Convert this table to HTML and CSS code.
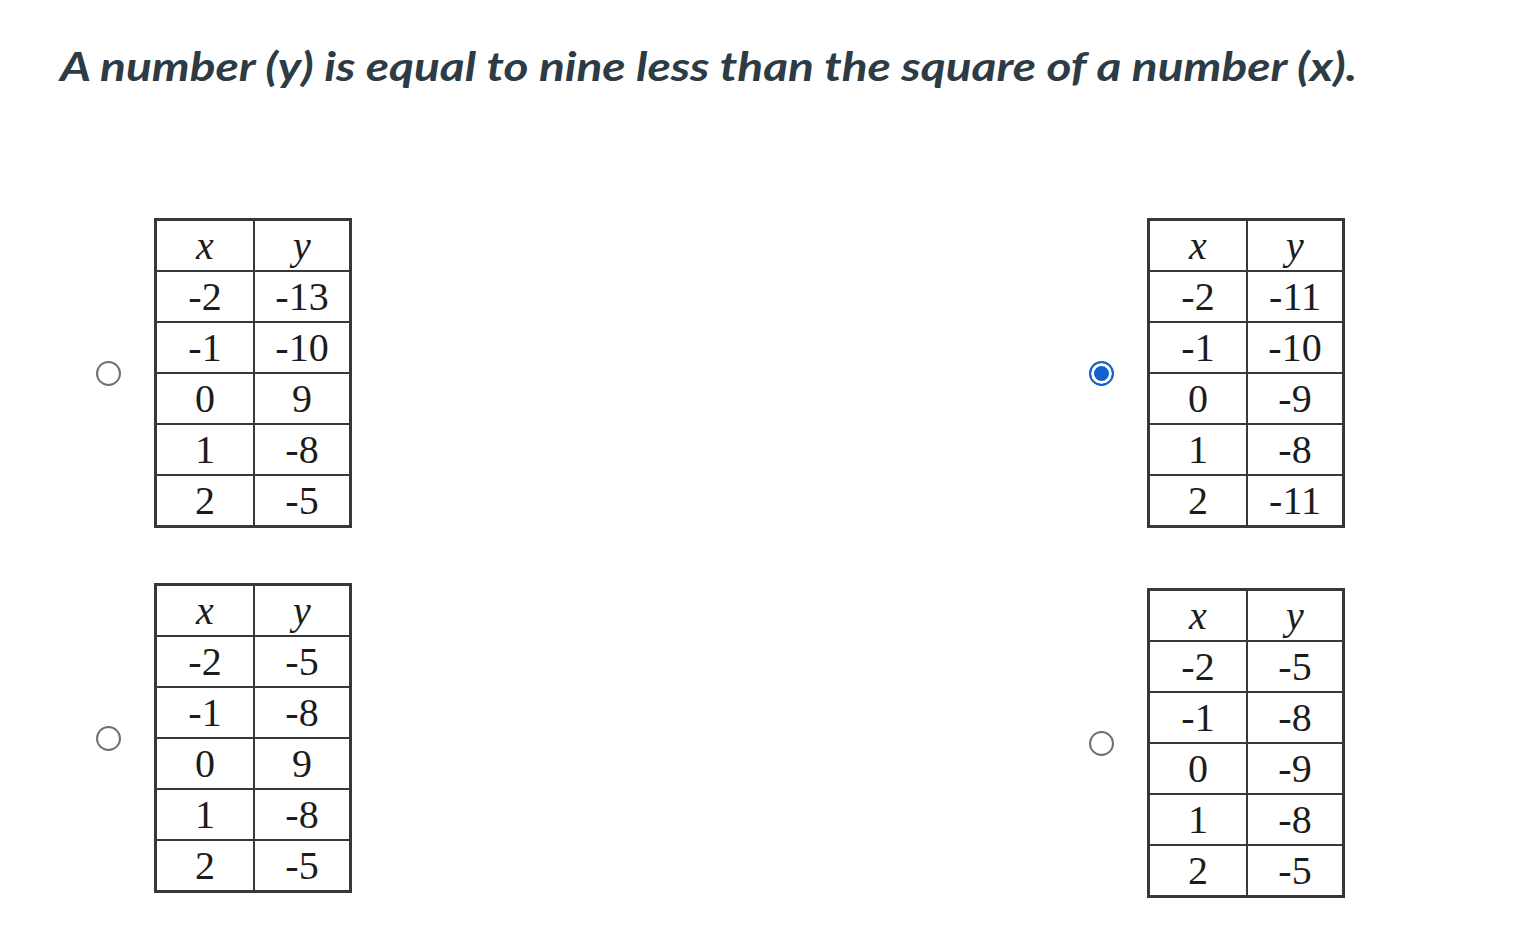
FILE: index.html
```html
<!DOCTYPE html>
<html lang="en">
<head>
<meta charset="utf-8">
<title>Question</title>
<link rel="stylesheet" href="styles.css">
</head>
<body>
<main class="page">
  <h1 class="question">A number (y) is equal to nine less than the square of a number (x).</h1>
  <div class="options">
    <label class="option">
      <input class="radio" type="radio" name="answer">
      <table class="xy">
        <tr><td class="var">x</td><td class="var">y</td></tr>
        <tr><td>-2</td><td>-13</td></tr>
        <tr><td>-1</td><td>-10</td></tr>
        <tr><td>0</td><td>9</td></tr>
        <tr><td>1</td><td>-8</td></tr>
        <tr><td>2</td><td>-5</td></tr>
      </table>
    </label>
    <label class="option">
      <input class="radio" type="radio" name="answer" checked>
      <table class="xy">
        <tr><td class="var">x</td><td class="var">y</td></tr>
        <tr><td>-2</td><td>-11</td></tr>
        <tr><td>-1</td><td>-10</td></tr>
        <tr><td>0</td><td>-9</td></tr>
        <tr><td>1</td><td>-8</td></tr>
        <tr><td>2</td><td>-11</td></tr>
      </table>
    </label>
    <label class="option">
      <input class="radio" type="radio" name="answer">
      <table class="xy">
        <tr><td class="var">x</td><td class="var">y</td></tr>
        <tr><td>-2</td><td>-5</td></tr>
        <tr><td>-1</td><td>-8</td></tr>
        <tr><td>0</td><td>9</td></tr>
        <tr><td>1</td><td>-8</td></tr>
        <tr><td>2</td><td>-5</td></tr>
      </table>
    </label>
    <label class="option option-low">
      <input class="radio" type="radio" name="answer">
      <table class="xy">
        <tr><td class="var">x</td><td class="var">y</td></tr>
        <tr><td>-2</td><td>-5</td></tr>
        <tr><td>-1</td><td>-8</td></tr>
        <tr><td>0</td><td>-9</td></tr>
        <tr><td>1</td><td>-8</td></tr>
        <tr><td>2</td><td>-5</td></tr>
      </table>
    </label>
  </div>
</main>
</body>
</html>
```

FILE: styles.css
```css
html, body {
  margin: 0;
  padding: 0;
  background: #ffffff;
}

.page {
  padding: 42px 60px 0 60px;
}

.question {
  margin: 0;
  width: max-content;
  font-family: "Lato", "Liberation Sans", sans-serif;
  font-style: italic;
  font-weight: 700;
  font-size: 40px;
  line-height: 48px;
  color: #2d3b45;
  white-space: nowrap;
  transform: scaleX(1.195);
  transform-origin: left center;
}

.options {
  display: grid;
  grid-template-columns: 993px 1fr;
  align-items: start;
  row-gap: 55px;
  margin-top: 128px;
  padding-left: 36px;
}

.option {
  display: flex;
  align-items: center;
  gap: 33px;
  cursor: pointer;
}

.option-low {
  padding-top: 5px;
}

.radio {
  appearance: none;
  -webkit-appearance: none;
  margin: 0;
  width: 25px;
  height: 25px;
  border: 2px solid #707070;
  border-radius: 50%;
  background: #ffffff;
  flex: 0 0 auto;
}

.radio:checked {
  border-color: #135fcc;
  background: #135fcc;
  box-shadow: inset 0 0 0 3px #ffffff;
}

.xy {
  border-collapse: separate;
  border-spacing: 0;
  border: 3px solid #383838;
  font-family: "Liberation Serif", "Times New Roman", serif;
  font-size: 40px;
  color: #1c1c1c;
}

.xy td {
  height: 49px;
  padding: 0;
  text-align: center;
  vertical-align: middle;
  line-height: 49px;
  border-bottom: 2px solid #383838;
}

.xy tr:last-child td {
  border-bottom: none;
}

.xy td:first-child {
  width: 96px;
  border-right: 2px solid #383838;
}

.xy td:last-child {
  width: 94px;
}

.xy .var {
  font-style: italic;
}
```
